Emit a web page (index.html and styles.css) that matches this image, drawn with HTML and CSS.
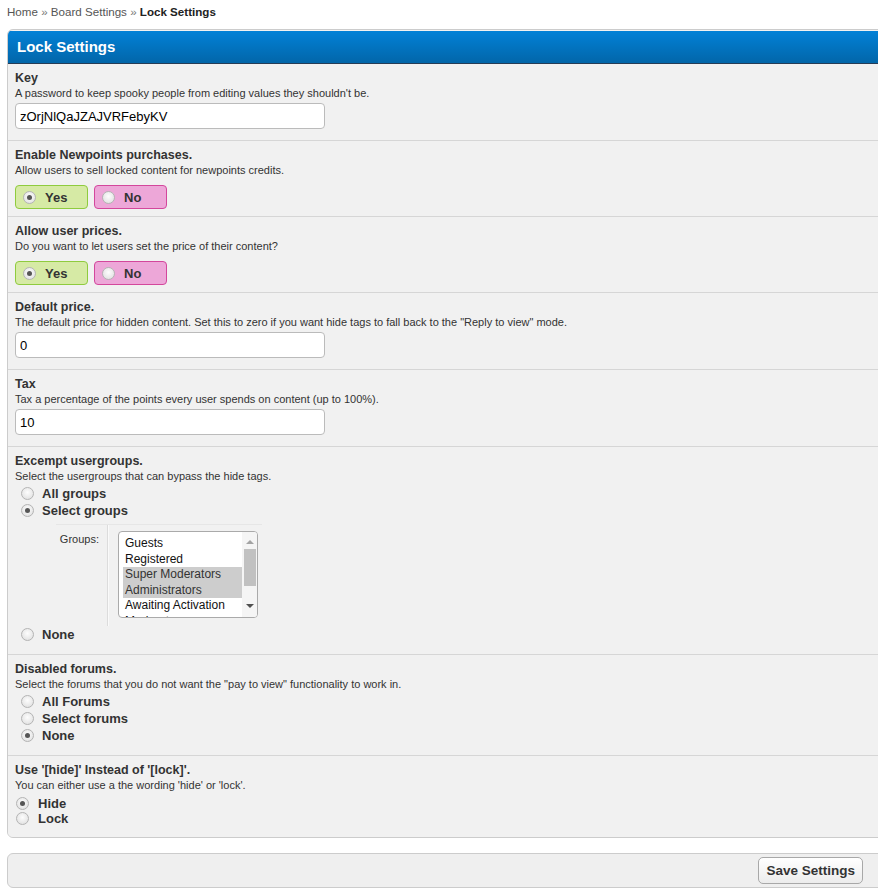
FILE: index.html
```html
<!DOCTYPE html>
<html>
<head>
<meta charset="utf-8">
<title>Lock Settings</title>
<link rel="stylesheet" href="styles.css">
</head>
<body>
<div class="nav">
  <a href="#">Home</a> <span class="sep">&raquo;</span> <a href="#">Board Settings</a> <span class="sep">&raquo;</span> <span class="active">Lock Settings</span>
</div>

<form class="settings">
  <div class="thead">Lock Settings</div>

  <div class="row">
    <div class="title">Key</div>
    <div class="desc">A password to keep spooky people from editing values they shouldn't be.</div>
    <input class="text" type="text" value="zOrjNlQaJZAJVRFebyKV">
  </div>

  <div class="row">
    <div class="title">Enable Newpoints purchases.</div>
    <div class="desc">Allow users to sell locked content for newpoints credits.</div>
    <div class="yesno">
      <label class="choice yes"><span class="radio on"></span>Yes</label>
      <label class="choice no"><span class="radio"></span>No</label>
    </div>
  </div>

  <div class="row">
    <div class="title">Allow user prices.</div>
    <div class="desc">Do you want to let users set the price of their content?</div>
    <div class="yesno">
      <label class="choice yes"><span class="radio on"></span>Yes</label>
      <label class="choice no"><span class="radio"></span>No</label>
    </div>
  </div>

  <div class="row">
    <div class="title">Default price.</div>
    <div class="desc">The default price for hidden content. Set this to zero if you want hide tags to fall back to the "Reply to view" mode.</div>
    <input class="text" type="text" value="0">
  </div>

  <div class="row">
    <div class="title">Tax</div>
    <div class="desc">Tax a percentage of the points every user spends on content (up to 100%).</div>
    <input class="text" type="text" value="10">
  </div>

  <div class="row">
    <div class="title">Excempt usergroups.</div>
    <div class="desc">Select the usergroups that can bypass the hide tags.</div>
    <div class="options">
      <label class="opt"><span class="radio"></span>All groups</label>
      <label class="opt"><span class="radio on"></span>Select groups</label>
      <div class="groups">
        <div class="glabel">Groups:</div>
        <div class="gcell">
          <div class="listbox">
            <div class="items">
              <div class="item">Guests</div>
              <div class="item">Registered</div>
              <div class="item sel">Super Moderators</div>
              <div class="item sel">Administrators</div>
              <div class="item">Awaiting Activation</div>
              <div class="item">Moderators</div>
            </div>
            <div class="scroll">
              <span class="arrow up"></span>
              <span class="thumb"></span>
              <span class="arrow down"></span>
            </div>
          </div>
        </div>
      </div>
      <label class="opt"><span class="radio"></span>None</label>
    </div>
  </div>

  <div class="row">
    <div class="title">Disabled forums.</div>
    <div class="desc">Select the forums that you do not want the "pay to view" functionality to work in.</div>
    <div class="options">
      <label class="opt"><span class="radio"></span>All Forums</label>
      <label class="opt"><span class="radio"></span>Select forums</label>
      <label class="opt"><span class="radio on"></span>None</label>
    </div>
  </div>

  <div class="row last">
    <div class="title">Use '[hide]' Instead of '[lock]'.</div>
    <div class="desc">You can either use a the wording 'hide' or 'lock'.</div>
    <div class="options tight">
      <label class="opt"><span class="radio on"></span>Hide</label>
      <label class="opt"><span class="radio"></span>Lock</label>
    </div>
  </div>
</form>

<div class="buttons">
  <button class="submit" type="button">Save Settings</button>
</div>
</body>
</html>
```

FILE: styles.css
```css
html, body {
  margin: 0;
  padding: 0;
  background: #fff;
  overflow: hidden;
}

body {
  font-family: "Liberation Sans", Arial, sans-serif;
  font-size: 12px;
  color: #333;
}

/* breadcrumb */
.nav {
  padding: 4px 7px 0;
  height: 21px;
  font-size: 11.6px;
  line-height: 15px;
  color: #555;
}
.nav a {
  color: #555;
  text-decoration: none;
}
.nav .sep {
  color: #777;
}
.nav .active {
  font-weight: bold;
  color: #222;
}

/* settings panel */
.settings {
  margin: 4px -30px 0 7px;
  border: 1px solid #ccc;
  border-radius: 6px;
  overflow: hidden;
  background: #f1f1f1;
}

.thead {
  height: 32px;
  padding: 0 9px;
  line-height: 32px;
  margin-top: 1px;
  background: linear-gradient(to bottom, #0281d7, #0266a9);
  border-bottom: 1px solid #263c56;
  color: #fff;
  font-size: 15px;
  font-weight: bold;
}

.row {
  padding: 7px 7px 11px;
  border-bottom: 1px solid #d6d6d6;
  background: #f1f1f1;
}
.row.last {
  border-bottom: 0;
  padding-bottom: 10px;
}

.title {
  font-size: 12.5px;
  font-weight: bold;
  line-height: 15px;
  color: #333;
}

.desc {
  font-size: 11px;
  line-height: 14px;
  color: #333;
}

.text {
  display: block;
  box-sizing: border-box;
  width: 310px;
  height: 26px;
  margin-top: 3px;
  padding: 3px 4px;
  border: 1px solid #bbb;
  border-radius: 4px;
  background: #fff;
  font-family: "Liberation Sans", Arial, sans-serif;
  font-size: 13px;
  color: #000;
}

/* yes / no selector */
.yesno {
  display: flex;
  gap: 6px;
  margin-top: 8px;
  margin-bottom: -4px;
}
.choice {
  box-sizing: border-box;
  display: flex;
  align-items: center;
  width: 73px;
  height: 24px;
  padding-left: 7px;
  border-radius: 4px;
  font-size: 13px;
  font-weight: bold;
  color: #333;
}
.choice .radio {
  margin-right: 9px;
}
.choice.yes {
  background: #d6eaa5;
  border: 1px solid #8fcb3e;
}
.choice.no {
  background: #eda7d8;
  border: 1px solid #d3479c;
}

/* radio glyphs */
.radio {
  box-sizing: border-box;
  display: inline-block;
  width: 13px;
  height: 13px;
  border-radius: 50%;
  border: 1px solid #b4b4b4;
  background: radial-gradient(circle at 50% 40%, #fdfdfd, #dcdcdc);
  position: relative;
  flex: none;
}
.radio.on::after {
  content: "";
  position: absolute;
  left: 3px;
  top: 3px;
  width: 5px;
  height: 5px;
  border-radius: 50%;
  background: #555;
}

/* option lists */
.options {
  margin-top: 2px;
  margin-bottom: 0;
}
.opt {
  display: flex;
  align-items: center;
  height: 17px;
  padding-left: 6px;
  font-size: 13px;
  font-weight: bold;
  color: #333;
}
.opt .radio {
  margin-right: 8px;
}
.options.tight {
  margin-top: 4px;
  margin-bottom: 1px;
}
.options.tight .opt {
  height: 15px;
  padding-left: 1px;
}
.options.tight .opt .radio {
  margin-right: 9px;
}

/* group picker */
.groups {
  display: flex;
  margin: 5px 0 0 41px;
  width: 206px;
  border-top: 1px solid #e6e6e6;
}
.glabel {
  width: 43px;
  padding: 8px 8px 0 0;
  text-align: right;
  font-size: 11px;
  color: #333;
  border-right: 1px solid #dcdcdc;
}
.gcell {
  padding: 6px 0 8px 9px;
  border-left: 1px solid #fafafa;
}
.listbox {
  box-sizing: border-box;
  display: flex;
  width: 140px;
  height: 87px;
  border: 1px solid #aaa;
  border-radius: 4px;
  background: #fff;
  overflow: hidden;
}
.items {
  flex: 1;
  padding: 4px 0 0 4px;
  overflow: hidden;
}
.item {
  height: 15.5px;
  line-height: 15.5px;
  padding-left: 2px;
  font-size: 12px;
  color: #111;
  white-space: nowrap;
}
.item.sel {
  background: #cdcdcd;
  color: #333;
}
.scroll {
  width: 15px;
  display: flex;
  flex-direction: column;
  align-items: center;
  background: #f5f5f5;
  padding: 4px 0;
}
.scroll .arrow {
  width: 0;
  height: 0;
  border-left: 4px solid transparent;
  border-right: 4px solid transparent;
}
.scroll .up {
  border-bottom: 4px solid #a3a3a3;
  margin: 4px 0 5px;
}
.scroll .down {
  border-top: 4px solid #505050;
  margin-top: 18px;
}
.scroll .thumb {
  width: 12px;
  height: 37px;
  background: #c1c1c1;
}

/* submit bar */
.buttons {
  display: flex;
  justify-content: flex-end;
  margin: 15px -30px 0 7px;
  padding: 3px 44px 3px 0;
  border: 1px solid #ccc;
  border-radius: 6px;
  background: #efefef;
}
.submit {
  height: 27px;
  padding: 0 7px;
  border: 1px solid #a8a8a8;
  border-radius: 5px;
  background: linear-gradient(to bottom, #fff, #ececec);
  font-family: "Liberation Sans", Arial, sans-serif;
  font-size: 13.5px;
  font-weight: bold;
  color: #333;
}
```
